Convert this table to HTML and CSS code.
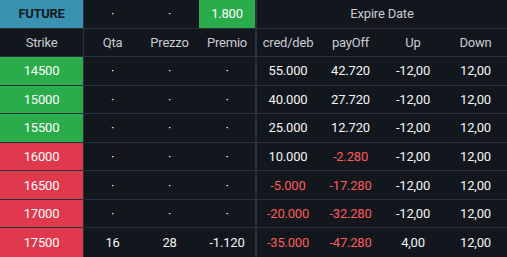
FILE: index.html
```html
<!DOCTYPE html>
<html>
<head>
<meta charset="utf-8">
<link rel="stylesheet" href="styles.css">
</head>
<body>
<div class="grid">
  <div class="c strike future">FUTURE</div>
  <div class="c">·</div>
  <div class="c">·</div>
  <div class="c gsep"><span class="premio">1.800</span></div>
  <div class="c head span4">Expire Date</div>

  <div class="c strike head">Strike</div>
  <div class="c head">Qta</div>
  <div class="c head">Prezzo</div>
  <div class="c head gsep">Premio</div>
  <div class="c head">cred/deb</div>
  <div class="c head">payOff</div>
  <div class="c head">Up</div>
  <div class="c head">Down</div>

  <div class="c strike green">14500</div>
  <div class="c">·</div><div class="c">·</div><div class="c gsep">·</div>
  <div class="c">55.000</div><div class="c">42.720</div><div class="c">-12,00</div><div class="c">12,00</div>

  <div class="c strike green">15000</div>
  <div class="c">·</div><div class="c">·</div><div class="c gsep">·</div>
  <div class="c">40.000</div><div class="c">27.720</div><div class="c">-12,00</div><div class="c">12,00</div>

  <div class="c strike green">15500</div>
  <div class="c">·</div><div class="c">·</div><div class="c gsep">·</div>
  <div class="c">25.000</div><div class="c">12.720</div><div class="c">-12,00</div><div class="c">12,00</div>

  <div class="c strike red">16000</div>
  <div class="c">·</div><div class="c">·</div><div class="c gsep">·</div>
  <div class="c">10.000</div><div class="c neg">-2.280</div><div class="c">-12,00</div><div class="c">12,00</div>

  <div class="c strike red">16500</div>
  <div class="c">·</div><div class="c">·</div><div class="c gsep">·</div>
  <div class="c neg">-5.000</div><div class="c neg">-17.280</div><div class="c">-12,00</div><div class="c">12,00</div>

  <div class="c strike red">17000</div>
  <div class="c">·</div><div class="c">·</div><div class="c gsep">·</div>
  <div class="c neg">-20.000</div><div class="c neg">-32.280</div><div class="c">-12,00</div><div class="c">12,00</div>

  <div class="c strike red last">17500</div>
  <div class="c last">16</div><div class="c last">28</div><div class="c gsep last">-1.120</div>
  <div class="c neg last">-35.000</div><div class="c neg last">-47.280</div><div class="c last">4,00</div><div class="c last">12,00</div>
</div>
</body>
</html>
```

FILE: styles.css
```css
html, body {
  margin: 0;
  padding: 0;
  background: #12161d;
}
body {
  width: 507px;
  height: 257px;
  overflow: hidden;
  font-family: Roboto, "Liberation Sans", sans-serif;
}
.grid {
  display: grid;
  grid-template-columns: 84px 57px 57px 59px 62px 63px 62px 63px;
  grid-template-rows: repeat(9, 1fr);
  height: 257px;
  width: 507px;
}
.c {
  box-sizing: border-box;
  display: flex;
  align-items: center;
  justify-content: center;
  border-bottom: 1px solid #27313d;
  color: #f4f5f6;
  font-size: 13px;
  letter-spacing: -0.2px;
  background: #12161d;
}
.c.last {
  border-bottom-color: #12161d;
}
.strike {
  border-right: 1px solid #27313d;
}
.gsep {
  border-right: 2px solid #27313d;
  padding-left: 1px;
}
.span4 {
  grid-column: span 4;
}
.head {
  color: #c9ccd1;
}
.future {
  background: #3a92b2;
  color: #0f1a22;
  font-weight: 700;
  font-size: 13px;
  letter-spacing: -0.3px;
}
.green {
  background: #2aac4a;
  color: #ffffff;
}
.red {
  background: #e0384d;
  color: #ffffff;
}
.strike.last {
  border-bottom: none;
}
.premio {
  align-self: stretch;
  flex: 1;
  display: flex;
  align-items: center;
  justify-content: center;
  background: #2aac4a;
  color: #ffffff;
}
.neg {
  color: #ff5a5a;
}
```
